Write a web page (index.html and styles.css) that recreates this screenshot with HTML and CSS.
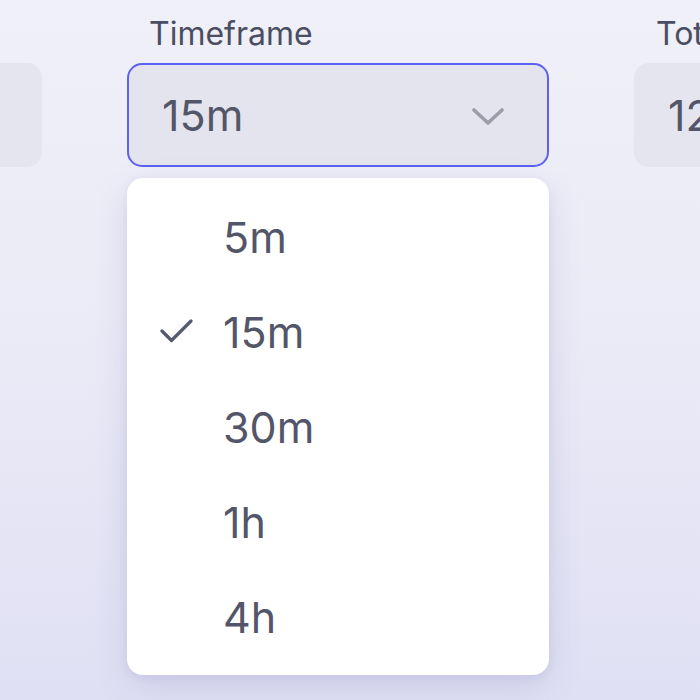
FILE: index.html
```html
<!DOCTYPE html>
<html lang="en">
<head>
<meta charset="utf-8">
<title>Timeframe</title>
<link rel="stylesheet" href="styles.css">
</head>
<body>
  <div class="filters">
    <div class="field">
      <div class="label"></div>
      <div class="box"></div>
    </div>
    <div class="field field-open">
      <div class="label">Timeframe</div>
      <div class="box select">
        <span class="value">15m</span>
        <svg class="chevron" width="32" height="20" viewBox="0 0 32 20" aria-hidden="true">
          <path d="M2 4 L16 17 L30 4" fill="none" stroke="currentColor" stroke-width="3.6" stroke-linecap="round" stroke-linejoin="round"/>
        </svg>
      </div>
      <ul class="menu">
        <li class="item"><span class="mark"></span><span>5m</span></li>
        <li class="item selected"><span class="mark">
          <svg width="34" height="26" viewBox="0 0 34 26" aria-hidden="true">
            <path d="M2 13 L11.5 22.5 L31 3" fill="none" stroke="currentColor" stroke-width="3.2" stroke-linecap="round" stroke-linejoin="round"/>
          </svg></span><span>15m</span></li>
        <li class="item"><span class="mark"></span><span>30m</span></li>
        <li class="item"><span class="mark"></span><span>1h</span></li>
        <li class="item"><span class="mark"></span><span>4h</span></li>
      </ul>
    </div>
    <div class="field">
      <div class="label">Total</div>
      <div class="box"><span class="value">120</span></div>
    </div>
  </div>
</body>
</html>
```

FILE: styles.css
```css
html, body {
  margin: 0;
  padding: 0;
  height: 100%;
}

body {
  font-family: Inter, "Noto Sans", "Liberation Sans", sans-serif;
  background: linear-gradient(180deg, #f0f0f9 0%, #ebebf7 45%, #e0e0f4 100%);
  overflow: hidden;
}

.filters {
  display: flex;
  gap: 85px;
  padding-top: 14px;
  margin-left: -380px;
}

.field {
  position: relative;
  width: 422px;
  flex: none;
}

.label {
  font-size: 32px;
  line-height: 40px;
  height: 40px;
  color: #4b4e62;
  padding-left: 22px;
  margin-bottom: 9px;
}

.box {
  box-sizing: border-box;
  height: 104px;
  border-radius: 15px;
  background: #e5e5ef;
  display: flex;
  align-items: center;
  padding: 0 32px 0 34px;
}

.select {
  border: 2px solid #5d60f0;
  background: #e4e4ee;
  justify-content: space-between;
  padding: 0 43px 0 33px;
}

.value {
  font-size: 43px;
  line-height: 52px;
  color: #535669;
}

.chevron {
  color: #9c9cab;
  display: block;
  margin-top: 2px;
}

.menu {
  position: absolute;
  top: 164px;
  left: 0;
  width: 422px;
  box-sizing: border-box;
  margin: 0;
  padding: 12px 0 10px;
  list-style: none;
  background: #ffffff;
  border-radius: 16px;
  box-shadow: 0 12px 34px rgba(90, 90, 160, 0.16), 0 2px 8px rgba(90, 90, 160, 0.08);
}

.item {
  display: flex;
  align-items: center;
  height: 95px;
  font-size: 43px;
  line-height: 95px;
  color: #535669;
}

.mark {
  width: 96px;
  flex: none;
  display: flex;
  align-items: center;
  padding-left: 33px;
  box-sizing: border-box;
  color: #565a6f;
}

.mark svg {
  display: block;
  margin-top: -3px;
}
```
